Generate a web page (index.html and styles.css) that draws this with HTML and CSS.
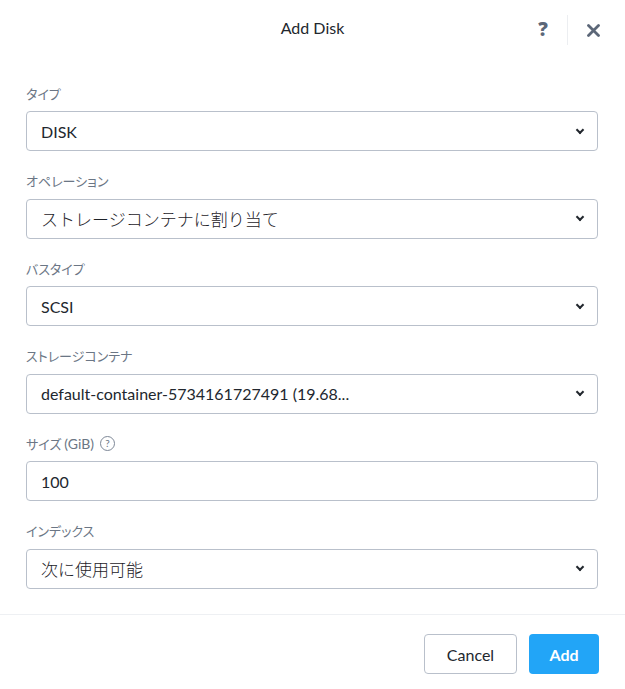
FILE: index.html
```html
<!DOCTYPE html>
<html lang="ja">
<head>
    <meta charset="UTF-8">
    <title>Add Disk</title>
    <link rel="stylesheet" href="styles.css">
</head>
<body>
    <div class="modal">
        <div class="modal-header">
            <h2>Add Disk</h2>
            <div class="header-actions">
                <span class="help">?</span>
                <span class="divider"></span>
                <span class="close">
                    <svg width="13" height="13" viewBox="0 0 13 13"><path d="M1.5 1.5 L11.5 11.5 M11.5 1.5 L1.5 11.5" stroke="#5c6778" stroke-width="2.8" stroke-linecap="round"/></svg>
                </span>
            </div>
        </div>

        <div class="modal-body">
            <div class="field">
                <label>タイプ</label>
                <div class="select"><span>DISK</span><i class="chevron"></i></div>
            </div>
            <div class="field">
                <label>オペレーション</label>
                <div class="select"><span class="ja">ストレージコンテナに割り当て</span><i class="chevron"></i></div>
            </div>
            <div class="field">
                <label>バスタイプ</label>
                <div class="select"><span>SCSI</span><i class="chevron"></i></div>
            </div>
            <div class="field">
                <label>ストレージコンテナ</label>
                <div class="select"><span>default-container-5734161727491 (19.68...</span><i class="chevron"></i></div>
            </div>
            <div class="field">
                <label>サイズ<span class="latin">(GiB)</span><span class="q-icon">?</span></label>
                <div class="input">100</div>
            </div>
            <div class="field">
                <label>インデックス</label>
                <div class="select"><span class="ja">次に使用可能</span><i class="chevron"></i></div>
            </div>
        </div>

        <div class="modal-footer">
            <button class="btn btn-cancel">Cancel</button>
            <button class="btn btn-add">Add</button>
        </div>
    </div>
</body>
</html>
```

FILE: styles.css
```css
body {
    margin: 0;
    background-color: #fff;
    font-family: Lato, "Noto Sans CJK JP", sans-serif;
    color: #22272e;
}

.modal {
    width: 625px;
}

.modal-header {
    height: 56px;
    display: flex;
    align-items: center;
    justify-content: center;
    position: relative;
}

.modal-header h2 {
    margin: 0 0 2px 0;
    font-size: 16px;
    font-weight: 400;
    color: #22272e;
}

.header-actions {
    position: absolute;
    right: 25px;
    top: 15px;
    height: 30px;
    display: flex;
    align-items: center;
}

.help {
    font-family: "Open Sans", sans-serif;
    font-size: 19px;
    font-weight: 800;
    color: #5c6778;
    width: 12px;
    text-align: center;
    margin-bottom: 2px;
}

.divider {
    width: 1px;
    height: 30px;
    background-color: #eceef1;
    margin: 0 19px 0 18px;
}

.close {
    display: flex;
}

.modal-body {
    padding: 28px 27px 5px 26px;
}

.field {
    margin-bottom: 20.5px;
}

.field label {
    display: flex;
    align-items: center;
    height: 18px;
    margin-bottom: 9px;
    font-size: 13px;
    color: #6b7685;
    font-feature-settings: "palt";
}

.field label .latin {
    font-size: 14px;
    margin-left: 3px;
}

.q-icon {
    display: inline-flex;
    align-items: center;
    justify-content: center;
    width: 13px;
    height: 13px;
    border: 1px solid #7d8796;
    border-radius: 50%;
    font-size: 10px;
    margin-left: 6px;
    color: #6b7685;
}

.select,
.input {
    height: 40px;
    box-sizing: border-box;
    border: 1px solid #b9c0cb;
    border-radius: 4px;
    display: flex;
    align-items: center;
    padding: 0 13px 0 14px;
    font-size: 16px;
    color: #22272e;
}

.select span {
    flex: 1;
    white-space: nowrap;
    overflow: hidden;
}

.select .ja {
    font-size: 17px;
    font-weight: 300;
    color: #1d2228;
}

.chevron {
    width: 4px;
    height: 4px;
    border-right: 2px solid #22272e;
    border-bottom: 2px solid #22272e;
    transform: rotate(45deg);
    margin: -3px 1px 0 0;
}

.modal-footer {
    border-top: 1px solid #eef0f3;
    display: flex;
    justify-content: flex-end;
    gap: 12px;
    padding: 19px 26px 0 0;
}

.btn {
    height: 40px;
    border-radius: 4px;
    font-family: Lato, sans-serif;
    font-size: 16px;
    cursor: pointer;
}

.btn-cancel {
    width: 93px;
    background-color: #fff;
    border: 1px solid #b9c0cb;
    color: #22272e;
}

.btn-add {
    width: 70px;
    background-color: #22a5f7;
    border: none;
    color: #fff;
    font-weight: 700;
}
```
